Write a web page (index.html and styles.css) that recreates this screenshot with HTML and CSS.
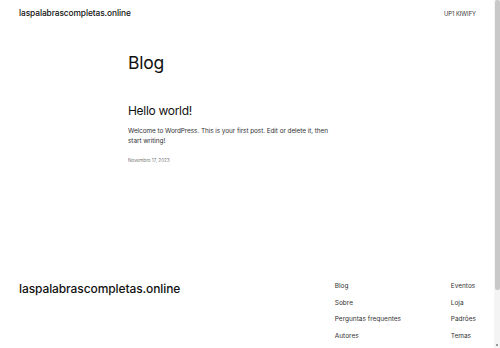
FILE: index.html
```html
<!DOCTYPE html>
<html lang="pt">
<head>
<meta charset="utf-8">
<title>Blog</title>
<link rel="stylesheet" href="styles.css">
</head>
<body>
<header class="site-header">
  <a class="site-title" href="#">laspalabrascompletas.online</a>
  <nav class="top-nav"><a href="#">UP1 KIWIFY</a></nav>
</header>
<main class="main">
  <h1 class="page-title">Blog</h1>
  <article class="post">
    <h2 class="post-title">Hello world!</h2>
    <p class="post-excerpt">Welcome to WordPress. This is your first post. Edit or delete it, then start writing!</p>
    <div class="post-date">Novembro 17, 2023</div>
  </article>
</main>
<footer class="site-footer">
  <a class="footer-title" href="#">laspalabrascompletas.online</a>
  <div class="footer-cols">
    <ul class="footer-col">
      <li><a href="#">Blog</a></li>
      <li><a href="#">Sobre</a></li>
      <li><a href="#">Perguntas frequentes</a></li>
      <li><a href="#">Autores</a></li>
    </ul>
    <ul class="footer-col">
      <li><a href="#">Eventos</a></li>
      <li><a href="#">Loja</a></li>
      <li><a href="#">Padrões</a></li>
      <li><a href="#">Temas</a></li>
    </ul>
  </div>
</footer>
<div class="scrollbar"><div class="scrollbar-thumb"></div><div class="scrollbar-arrow"></div></div>
</body>
</html>
```
FILE: styles.css
```css
html, body {
  margin: 0;
  padding: 0;
  background: #ffffff;
}
body {
  font-family: Inter, "Noto Sans", sans-serif;
  color: #111111;
  padding-right: 6px;
  height: 348px;
  overflow: hidden;
  box-sizing: border-box;
}
a {
  color: inherit;
  text-decoration: none;
}
.site-header {
  display: flex;
  justify-content: space-between;
  align-items: center;
  padding: 8px 18px 0 19px;
  height: 10px;
}
.site-title {
  font-size: 8.4px;
  font-weight: 500;
  letter-spacing: -0.1px;
}
.top-nav {
  font-size: 5.8px;
  color: #333;
}
.main {
  width: 238px;
  margin: 0 auto;
  padding-top: 34px;
  min-height: 217px;
}
.page-title {
  margin: 0;
  font-size: 17.5px;
  font-weight: 400;
  line-height: 22px;
  letter-spacing: -0.2px;
}
.post {
  margin-top: 29px;
}
.post-title {
  margin: 0;
  font-size: 12px;
  font-weight: 400;
  line-height: 16px;
  letter-spacing: -0.3px;
}
.post-excerpt {
  margin: 7px 0 0;
  max-width: 205px;
  font-size: 6.4px;
  line-height: 10px;
  color: #333;
  letter-spacing: -0.05px;
}
.post-date {
  margin-top: 12px;
  font-size: 4.6px;
  color: #777;
}
.site-footer {
  display: flex;
  justify-content: space-between;
  padding: 12px 18px 0 19px;
}
.footer-title {
  font-size: 12px;
  font-weight: 500;
  line-height: 16px;
  letter-spacing: -0.1px;
}
.footer-cols {
  display: flex;
  margin-top: -3px;
}
.footer-col {
  list-style: none;
  margin: 0;
  padding: 0;
  width: 116px;
  font-size: 6.5px;
  line-height: 16.6px;
  color: #333;
}
.footer-col:last-child {
  width: auto;
}
.scrollbar {
  position: fixed;
  top: 0;
  right: 0;
  width: 6px;
  height: 348px;
  background: #f4f4f4;
}
.scrollbar-thumb {
  margin: 0 auto;
  width: 5px;
  height: 290px;
  background: #c8c8c8;
  border-radius: 2px;
}
.scrollbar-arrow {
  position: absolute;
  bottom: 2px;
  left: 2px;
  width: 2px;
  height: 2px;
  background: #9a9a9a;
}
```
